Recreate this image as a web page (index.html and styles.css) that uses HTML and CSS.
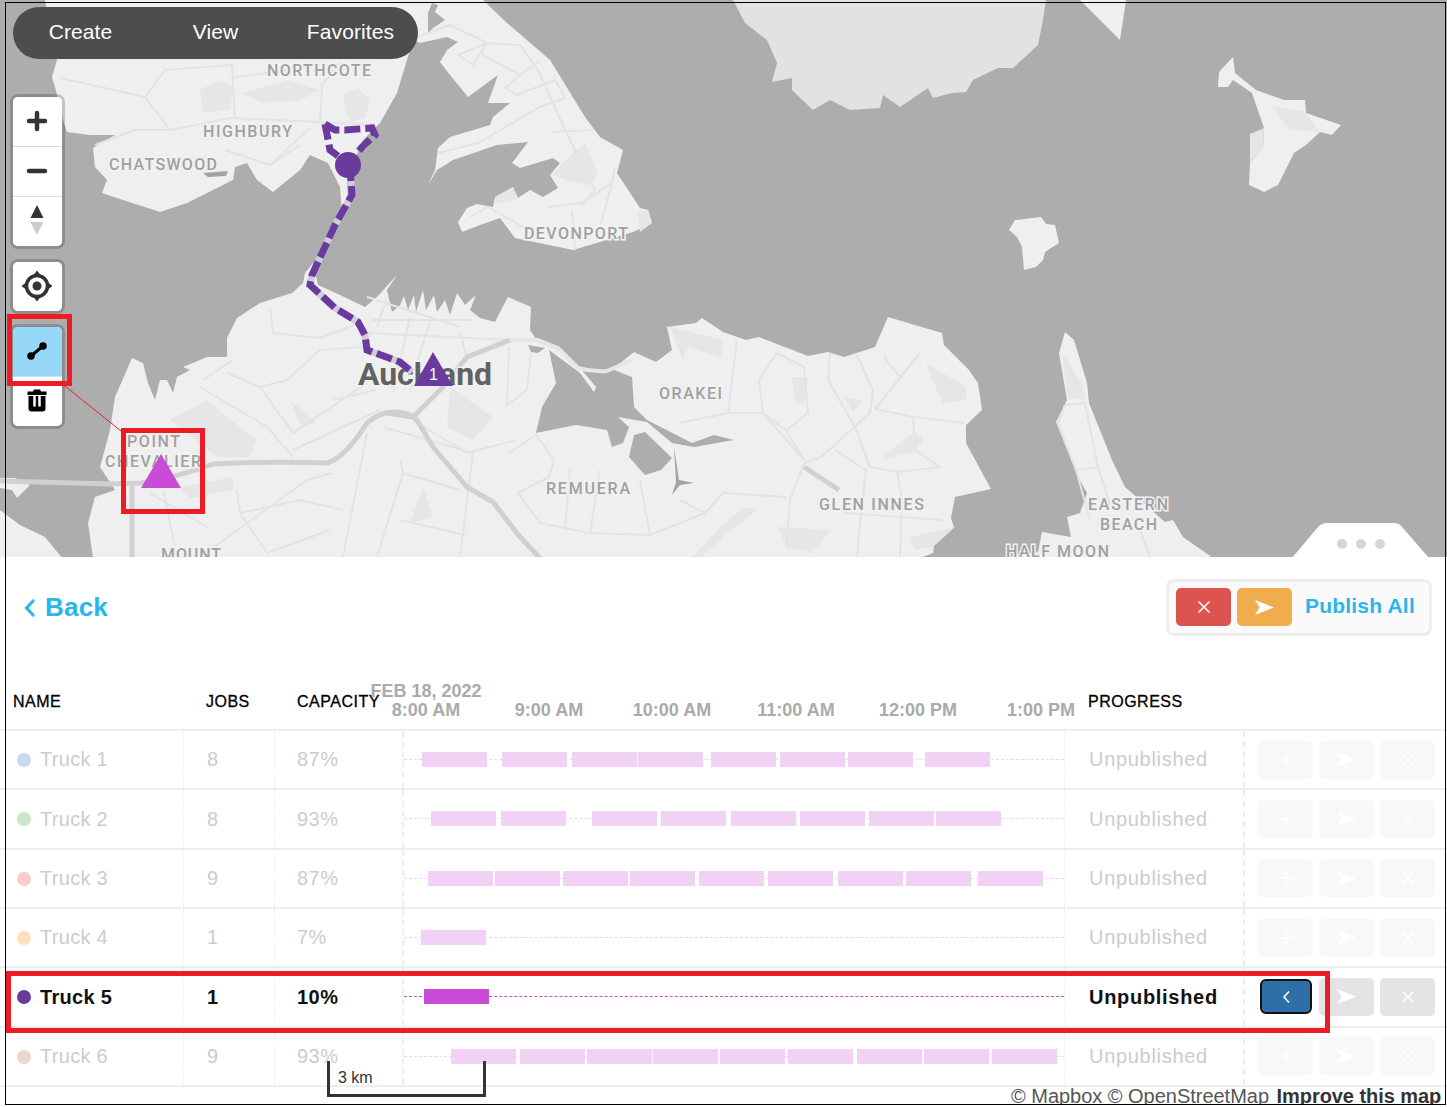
FILE: index.html
```html
<!DOCTYPE html>
<html lang="en">
  <head>
    <meta charset="UTF-8" />
    <title>Routes</title>
    <link rel="stylesheet" href="styles.css" />
  </head>
  <body>
    <div class="page">
      <section class="map">
        <svg class="map-canvas" width="1447" height="558" viewBox="0 0 1447 558">
          <rect class="water" width="1447" height="558" />

          <!-- land -->
          <path class="land" d="M45 0 L57 60 L52 77 L60 105 L63 120 L67 132 L90 135 L115 135 L93 148 L95 167 L107 180 L102 193 L123 200 L160 212 L187 203 L233 180 L235 167 L247 163 L257 180 L273 192 L300 170 L310 155 L328 163 L340 187 L342 213 L348 205 L347 177 L363 140 L380 123 L397 93 L413 40 L420 43 L447 37 L458 42 L447 50 L440 62 L450 75 L468 97 L498 75 L488 103 L510 103 L493 117 L490 125 L450 137 L438 148 L435 170 L428 185 L437 170 L453 160 L497 145 L528 142 L512 163 L520 168 L553 158 L560 163 L550 175 L558 188 L543 197 L530 190 L518 198 L513 187 L495 197 L493 207 L477 204 L467 208 L458 222 L462 232 L480 225 L500 218 L515 238 L573 250 L600 242 L633 232 L652 223 L648 210 L640 208 L617 173 L623 150 L600 137 L585 117 L550 60 L507 23 L483 0 Z" />
          <path class="land" d="M93 558 L88 523 L95 497 L115 490 L100 467 L110 430 L115 397 L132 358 L143 363 L148 383 L155 400 L160 380 L167 380 L173 393 L177 377 L190 370 L183 367 L207 357 L227 357 L227 338 L237 318 L260 303 L292 293 L303 283 L305 273 L313 263 L318 285 L340 295 L365 307 L377 297 L397 275 L387 290 L392 312 L400 305 L404 296 L408 310 L414 295 L416 312 L423 290 L426 310 L434 295 L437 312 L445 300 L450 315 L457 293 L465 305 L476 295 L470 310 L480 318 L495 322 L500 312 L508 297 L531 307 L530 330 L538 342 L558 350 L578 369 L607 372 L614 368 L634 352 L656 362 L672 350 L667 327 L696 323 L702 318 L723 332 L746 340 L759 337 L808 356 L828 352 L844 357 L875 347 L888 317 L942 333 L944 345 L969 370 L978 383 L982 410 L966 425 L966 443 L991 489 L955 497 L951 518 L954 527 L935 540 L933 553 L920 558 Z" />
          <path class="land" d="M1065 332 L1059 353 L1067 400 L1056 422 L1078 477 L1087 493 L1080 513 L1067 517 L1071 537 L1042 532 L1038 552 L1004 558 L1213 558 L1183 537 L1173 520 L1165 522 L1125 487 L1112 460 L1089 403 L1087 383 L1074 340 Z" />
          <path class="land" d="M0 510 L20 525 L45 537 L62 558 L0 558 Z" />
          <path class="land" d="M0 478 L15 478 L30 485 L17 498 L12 490 L0 488 Z" />
          <path class="land-dark" d="M733 0 L745 23 L767 40 L777 63 L772 82 L792 78 L792 90 L813 110 L830 100 L850 110 L880 108 L883 95 L900 107 L928 88 L933 98 L952 93 L966 92 L973 80 L998 68 L1013 68 L1038 45 L1043 20 L1046 0 Z" />
          <path class="land" d="M1080 0 L1120 40 L1126 0 Z" />
          <path class="land" d="M1233 57 L1219 72 L1218 87 L1228 87 L1233 80 L1252 93 L1264 128 L1263 147 L1250 163 L1249 185 L1264 192 L1278 185 L1294 153 L1306 145 L1320 132 L1332 135 L1341 125 L1306 113 L1305 100 L1284 100 L1256 90 L1235 73 Z" />
          <path class="land" d="M1041 217 L1015 220 L1009 230 L1017 237 L1022 247 L1024 270 L1036 267 L1043 260 L1045 252 L1059 243 L1055 225 L1046 224 Z" />

          <!-- bays -->
          <path class="water" d="M432 3 L438 5 L435 12 L445 20 L433 28 L428 33 L428 13 Z" />
          <path class="water" d="M549 350 L556 383 L542 407 L536 433 L576 425 L607 430 L612 447 L623 443 L629 427 L618 417 L647 422 L672 443 L694 447 L734 440 L714 435 L692 443 L647 420 L634 407 L632 377 L614 370 L580 368 L596 387 L594 392 L580 373 Z" />
          <path class="water" d="M634 435 L629 457 L645 475 L661 470 L672 458 L645 432 Z" />
          <path class="water" d="M528 345 L545 348 L538 353 L531 352 Z" />
          <path class="water-dark" d="M674 447 L679 480 L694 483 L680 485 L672 495 L676 482 Z" />
          <path class="water-dark" d="M213 443 L240 455 L220 453 Z" />
          <path class="water-dark" d="M203 173 L228 171 L226 176 L208 177 Z" />

          <!-- parks and suburbs -->
          <path class="park" d="M200 90 L220 80 L233 87 L230 110 L203 113 Z" />
          <path class="park" d="M242 93 L290 80 L320 90 L300 100 L262 103 Z" />
          <path class="park" d="M343 95 L358 88 L370 100 L365 118 L350 122 L345 110 Z" />
          <path class="park" d="M585 143 L598 173 L590 185 L572 182 L552 175 L563 163 Z" />
          <path class="park" d="M495 197 L513 187 L518 198 L497 204 Z" />
          <path class="park" d="M637 212 L648 210 L652 223 L640 232 Z" />
          <path class="park" d="M170 420 L207 400 L227 417 L257 440 L250 457 L217 457 Z" />
          <path class="park" d="M180 487 L233 477 L233 490 L190 498 Z" />
          <path class="park" d="M290 400 L317 423 L300 425 Z" />
          <path class="park" d="M450 387 L493 417 L473 440 L447 427 Z" />
          <path class="park" d="M410 523 L433 517 L423 487 Z" />
          <path class="park" d="M670 327 L723 340 L721 358 L688 347 L683 360 Z" />
          <path class="park" d="M792 377 L808 377 L804 405 L795 403 Z" />
          <path class="park" d="M844 397 L862 400 L853 413 Z" />
          <path class="park" d="M884 455 L915 432 L924 440 L911 453 L886 458 Z" />
          <path class="park" d="M926 363 L966 387 L966 400 L942 403 Z" />
          <path class="park" d="M910 537 L955 527 L933 547 L915 550 Z" />
          <path class="park" d="M779 527 L830 530 L812 553 L786 547 Z" />
          <path class="park" d="M745 507 L757 510 L725 535 L700 558 L692 558 L722 525 Z" />
          <path class="park" d="M1062 353 L1082 383 L1086 400 L1068 398 Z" />
          <path class="park" d="M1250 134 L1264 128 L1263 147 L1250 163 Z" />
          <path class="park" d="M1270 105 L1305 112 L1320 132 L1290 130 Z" />

          <!-- roads -->
          <g class="roads">
            <path d="M60 78 L145 97 L170 130 L230 118 L320 122 L375 125" />
            <path d="M145 97 L165 70 L232 65 L235 118" />
            <path d="M232 78 L320 65 M320 122 L322 85 L340 63" />
            <path d="M95 145 L135 130 L170 130 M225 150 L270 165 L300 145 M270 165 L310 128" />
            <path d="M415 38 L450 25 L487 43 L520 45 L538 70 L565 130 L595 190 L582 205" />
            <path d="M487 43 L458 55 L473 65 L487 43 M482 55 L520 75 L538 62" />
            <path d="M520 75 L505 88 L517 95 L555 80 L565 98 L540 107 L478 143 L438 153" />
            <path d="M552 132 L593 130 M612 183 L582 203 L548 207 M612 183 L600 227 M615 167 L612 183" />
            <path d="M572 210 L575 250 M470 217 L488 207 L523 227" />
            <path d="M270 307 L273 333 L320 338 L360 323 M203 380 L233 360" />
            <path d="M200 387 L267 427 L293 457 M227 373 L260 387 L287 380 L320 350 L363 347" />
            <path d="M260 387 L293 433 L367 383 M333 400 L377 390 M293 450 L380 410" />
            <path d="M367 297 L460 327 M372 320 L470 320 M377 327 L387 297 M410 317 L393 393" />
            <path d="M430 323 L420 353 L410 393 M460 333 L467 357 M367 333 L510 340" />
            <path d="M150 493 L207 527 M163 490 L177 557 M367 433 L343 557 M383 427 L473 453 L460 557" />
            <path d="M237 490 L240 513 L267 553 M200 557 L307 480 L333 473 M400 460 L403 473 L377 557" />
            <path d="M413 420 L467 453 L517 440" />
            <path d="M240 513 L300 500 L343 510 M403 473 L460 490 M267 553 L330 530 M400 520 L465 535" />
            <path d="M509 347 L507 405 L527 390 L531 353" />
            <path d="M509 453 L536 435 L554 460 L549 477 L518 493 L540 523 L589 533 L650 535 L705 513 L723 493 L786 497" />
            <path d="M570 468 L565 530 M600 470 L590 533 M640 480 L650 535 M680 500 L705 513" />
            <path d="M737 340 L728 413 L679 423 M728 413 L763 413 L804 460 L786 430 L808 413 L804 367 L777 353" />
            <path d="M786 430 L763 413 L759 380 L777 353" />
            <path d="M830 353 L828 380 L855 427 L870 467 L897 472 L940 467 L915 450 L913 417 L875 409" />
            <path d="M857 355 L873 390 L870 413 L821 457 L804 463 L790 500 L786 547" />
            <path d="M920 353 L875 409 M884 357 L900 377 M913 417 L964 423" />
            <path d="M835 450 L866 470 L859 533 L857 558 M897 472 L902 500 L900 557 M844 513 L942 520" />
            <path d="M1065 405 L1058 423 L1076 470 L1098 467 L1085 403 L1065 405" />
            <path d="M1098 467 L1110 505 M1076 470 L1090 520 M1140 530 L1150 557" />
          </g>
          <g class="motorways">
            <path d="M0 481 L110 484 L140 483 Q175 478 213 464 Q270 461 327 463 Q345 458 367 423 Q380 412 393 412 Q410 412 417 420 L433 447 L467 487 L493 502 L520 537 L540 558" />
            <path d="M387 413 L413 417 L443 387 L467 357 L510 340" />
            <path d="M132 486 L132 558 M804 467 L839 490" />
          </g>
          <path class="causeway" d="M510 340 L538 340 L558 348 L578 368 Q592 372 607 371 L632 360" />

          <!-- suburb labels -->
          <text class="suburb" x="267" y="76" textLength="104">NORTHCOTE</text>
          <text class="suburb" x="203" y="137" textLength="89">HIGHBURY</text>
          <text class="suburb" x="109" y="170" textLength="108">CHATSWOOD</text>
          <text class="suburb" x="524" y="239" textLength="104">DEVONPORT</text>
          <text class="suburb" x="127" y="447" textLength="53">POINT</text>
          <text class="suburb" x="105" y="467" textLength="96">CHEVALIER</text>
          <text class="suburb" x="161" y="560" textLength="60">MOUNT</text>
          <text class="suburb" x="659" y="399" textLength="63">ORAKEI</text>
          <text class="suburb" x="546" y="494" textLength="84">REMUERA</text>
          <text class="suburb" x="819" y="510" textLength="105">GLEN INNES</text>
          <text class="suburb" x="1088" y="510" textLength="80">EASTERN</text>
          <text class="suburb" x="1100" y="530" textLength="57">BEACH</text>
          <text class="suburb" x="1006" y="557" textLength="103">HALF MOON</text>
          <text class="city" x="358" y="385" textLength="134">Auckland</text>

          <!-- route -->
          <path class="route-under" d="M350 165 L352 195 L335 225 L318 262 L312 275 L310 285 L335 308 L358 322 L365 335 L367 350 L400 362 L412 372" />
          <path class="route-dash" d="M350 165 L352 195 L335 225 L318 262 L312 275 L310 285 L335 308 L358 322 L365 335 L367 350 L400 362 L412 372" />
          <path class="route-dash" d="M325 124 L335 130 L345 130 L372 128 L375 135 L362 147 L352 160 M325 124 L330 150 L338 156" />
          <circle class="stop" cx="348" cy="165" r="13" />
          <path class="stop" d="M433 352 L453 386 L414 386 Z" />
          <text class="stop-num" x="433.5" y="380">1</text>
          <path class="job" d="M161 454 L181 488 L141 488 Z" />

          <path class="callout" d="M65 386 L121 431" />
        </svg>

        <nav class="menu">
          <a>Create</a>
          <a>View</a>
          <a>Favorites</a>
        </nav>

        <div class="controls">
          <div class="ctrl-group">
            <button class="ctrl">
              <svg width="22" height="22" viewBox="0 0 22 22"><path class="ico-thick" d="M11 3 V19 M3 11 H19" /></svg>
            </button>
            <button class="ctrl">
              <svg width="22" height="22" viewBox="0 0 22 22"><path class="ico-thick" d="M3 11 H19" /></svg>
            </button>
            <button class="ctrl">
              <svg width="16" height="32" viewBox="0 0 16 32"><path class="ico-dark" d="M8 0 L14.500 13 H1.500 Z" /><path class="ico-light" d="M1.500 17 H14.500 L8 30 Z" /></svg>
            </button>
          </div>
          <div class="ctrl-group">
            <button class="ctrl">
              <svg width="32" height="32" viewBox="0 0 32 32">
                <circle class="ico-ring" cx="16" cy="16" r="10.500" />
                <circle class="ico-dark" cx="16" cy="16" r="4.500" />
                <path class="ico-dark" d="M16 0.500 L19.500 5 H12.500 Z M16 31.500 L12.500 27 H19.500 Z M0.500 16 L5 12.500 V19.500 Z M31.500 16 L27 19.500 V12.500 Z" />
              </svg>
            </button>
          </div>
          <div class="ctrl-group">
            <button class="ctrl ctrl-on">
              <svg width="22" height="22" viewBox="0 0 22 22">
                <circle class="ico-black" cx="5" cy="16" r="3.800" />
                <circle class="ico-black" cx="17" cy="6" r="3.800" />
                <path class="ico-line" d="M5 16 L17 6" />
              </svg>
            </button>
            <button class="ctrl">
              <svg width="20" height="24" viewBox="0 0 20 24">
                <path class="ico-black" d="M7 0.500 H13 L14 2.500 H19.500 V6 H0.500 V2.500 H6 Z" />
                <path class="ico-black" d="M1.500 7 H18.500 V19.500 Q18.500 22.500 15.500 22.500 H4.500 Q1.500 22.500 1.500 19.500 Z" />
                <path class="ico-slot" d="M7.500 7 V17.500 M12.500 7 V17.500" />
              </svg>
            </button>
          </div>
        </div>

        <svg class="handle" width="138" height="36" viewBox="0 0 138 36">
          <path class="handle-bg" d="M0 36 L26 5 Q30 1 35 1 H102 Q107 1 110 5 L137 36 Z" />
          <circle class="handle-dot" cx="50" cy="22" r="5" />
          <circle class="handle-dot" cx="69" cy="22" r="5" />
          <circle class="handle-dot" cx="88" cy="22" r="5" />
        </svg>
      </section>

      <section class="panel">
        <div class="toolbar">
          <a class="back">
            <svg width="12" height="20" viewBox="0 0 12 20"><path class="back-ico" d="M10 2 L2.500 10 L10 18" /></svg>
            Back
          </a>
          <div class="publish-box">
            <button class="btn btn-red">
              <svg width="14" height="14" viewBox="0 0 14 14"><path class="ico-white" d="M1.500 1.500 L12.500 12.500 M12.500 1.500 L1.500 12.500" /></svg>
            </button>
            <button class="btn btn-orange">
              <svg width="19" height="15" viewBox="0 0 19 15"><path class="ico-fill" d="M0 0 L19 7.500 L0 15 L4.500 7.500 Z" /></svg>
            </button>
            <span class="publish-label">Publish All</span>
          </div>
        </div>

        <div class="row-grid head">
          <div class="hcell hcell-name">NAME</div>
          <div class="hcell hcell-jobs">JOBS</div>
          <div class="hcell hcell-cap">CAPACITY</div>
          <div class="axis">
            <span class="tick" style="left: 22px">FEB 18, 2022<br />8:00 AM</span>
            <span class="tick" style="left: 145px">9:00 AM</span>
            <span class="tick" style="left: 268px">10:00 AM</span>
            <span class="tick" style="left: 392px">11:00 AM</span>
            <span class="tick" style="left: 514px">12:00 PM</span>
            <span class="tick" style="left: 637px">1:00 PM</span>
          </div>
          <div class="hcell hcell-prog">PROGRESS</div>
          <div></div>
        </div>

        <div class="row-grid row dim">
          <div class="cell name"><i class="dot dot-1"></i>Truck 1</div>
          <div class="cell jobs">8</div>
          <div class="cell cap">87%</div>
          <div class="cell track">
            <i class="bar" style="left: 18px"></i><i class="bar" style="left: 98px"></i><i class="bar" style="left: 168px"></i><i class="bar" style="left: 234px"></i><i class="bar" style="left: 307px"></i><i class="bar" style="left: 376px"></i><i class="bar" style="left: 444px"></i><i class="bar" style="left: 521px"></i>
          </div>
          <div class="cell prog">Unpublished</div>
          <div class="cell acts">
            <button class="act"><svg width="14" height="14" viewBox="0 0 14 14"><path class="ico-white" d="M7 0.500 V13.500 M0.500 7 H13.500" /></svg></button>
            <button class="act"><svg width="19" height="15" viewBox="0 0 19 15"><path class="ico-fill" d="M0 0 L19 7.500 L0 15 L4.500 7.500 Z" /></svg></button>
            <button class="act"><svg width="14" height="14" viewBox="0 0 14 14"><path class="ico-white" d="M1.500 1.500 L12.500 12.500 M12.500 1.500 L1.500 12.500" /></svg></button>
          </div>
        </div>

        <div class="row-grid row dim">
          <div class="cell name"><i class="dot dot-2"></i>Truck 2</div>
          <div class="cell jobs">8</div>
          <div class="cell cap">93%</div>
          <div class="cell track">
            <i class="bar" style="left: 27px"></i><i class="bar" style="left: 97px"></i><i class="bar" style="left: 188px"></i><i class="bar" style="left: 257px"></i><i class="bar" style="left: 327px"></i><i class="bar" style="left: 396px"></i><i class="bar" style="left: 465px"></i><i class="bar" style="left: 532px"></i>
          </div>
          <div class="cell prog">Unpublished</div>
          <div class="cell acts">
            <button class="act"><svg width="14" height="14" viewBox="0 0 14 14"><path class="ico-white" d="M7 0.500 V13.500 M0.500 7 H13.500" /></svg></button>
            <button class="act"><svg width="19" height="15" viewBox="0 0 19 15"><path class="ico-fill" d="M0 0 L19 7.500 L0 15 L4.500 7.500 Z" /></svg></button>
            <button class="act"><svg width="14" height="14" viewBox="0 0 14 14"><path class="ico-white" d="M1.500 1.500 L12.500 12.500 M12.500 1.500 L1.500 12.500" /></svg></button>
          </div>
        </div>

        <div class="row-grid row dim">
          <div class="cell name"><i class="dot dot-3"></i>Truck 3</div>
          <div class="cell jobs">9</div>
          <div class="cell cap">87%</div>
          <div class="cell track">
            <i class="bar" style="left: 24px"></i><i class="bar" style="left: 91px"></i><i class="bar" style="left: 159px"></i><i class="bar" style="left: 226px"></i><i class="bar" style="left: 295px"></i><i class="bar" style="left: 364px"></i><i class="bar" style="left: 434px"></i><i class="bar" style="left: 502px"></i><i class="bar" style="left: 574px"></i>
          </div>
          <div class="cell prog">Unpublished</div>
          <div class="cell acts">
            <button class="act"><svg width="14" height="14" viewBox="0 0 14 14"><path class="ico-white" d="M7 0.500 V13.500 M0.500 7 H13.500" /></svg></button>
            <button class="act"><svg width="19" height="15" viewBox="0 0 19 15"><path class="ico-fill" d="M0 0 L19 7.500 L0 15 L4.500 7.500 Z" /></svg></button>
            <button class="act"><svg width="14" height="14" viewBox="0 0 14 14"><path class="ico-white" d="M1.500 1.500 L12.500 12.500 M12.500 1.500 L1.500 12.500" /></svg></button>
          </div>
        </div>

        <div class="row-grid row dim">
          <div class="cell name"><i class="dot dot-4"></i>Truck 4</div>
          <div class="cell jobs">1</div>
          <div class="cell cap">7%</div>
          <div class="cell track">
            <i class="bar" style="left: 17px"></i>
          </div>
          <div class="cell prog">Unpublished</div>
          <div class="cell acts">
            <button class="act"><svg width="14" height="14" viewBox="0 0 14 14"><path class="ico-white" d="M7 0.500 V13.500 M0.500 7 H13.500" /></svg></button>
            <button class="act"><svg width="19" height="15" viewBox="0 0 19 15"><path class="ico-fill" d="M0 0 L19 7.500 L0 15 L4.500 7.500 Z" /></svg></button>
            <button class="act"><svg width="14" height="14" viewBox="0 0 14 14"><path class="ico-white" d="M1.500 1.500 L12.500 12.500 M12.500 1.500 L1.500 12.500" /></svg></button>
          </div>
        </div>

        <div class="row-grid row active">
          <div class="cell name"><i class="dot dot-5"></i>Truck 5</div>
          <div class="cell jobs">1</div>
          <div class="cell cap">10%</div>
          <div class="cell track">
            <i class="bar" style="left: 20px"></i>
          </div>
          <div class="cell prog">Unpublished</div>
          <div class="cell acts">
            <button class="act act-open"><svg width="9" height="14" viewBox="0 0 9 14"><path class="ico-white" d="M7 1.500 L2 7 L7 12.500" /></svg></button>
            <button class="act"><svg width="19" height="15" viewBox="0 0 19 15"><path class="ico-fill" d="M0 0 L19 7.500 L0 15 L4.500 7.500 Z" /></svg></button>
            <button class="act"><svg width="14" height="14" viewBox="0 0 14 14"><path class="ico-white" d="M1.500 1.500 L12.500 12.500 M12.500 1.500 L1.500 12.500" /></svg></button>
          </div>
        </div>

        <div class="row-grid row dim">
          <div class="cell name"><i class="dot dot-6"></i>Truck 6</div>
          <div class="cell jobs">9</div>
          <div class="cell cap">93%</div>
          <div class="cell track">
            <i class="bar" style="left: 47px"></i><i class="bar" style="left: 116px"></i><i class="bar" style="left: 183px"></i><i class="bar" style="left: 249px"></i><i class="bar" style="left: 316px"></i><i class="bar" style="left: 384px"></i><i class="bar" style="left: 453px"></i><i class="bar" style="left: 520px"></i><i class="bar" style="left: 588px"></i>
          </div>
          <div class="cell prog">Unpublished</div>
          <div class="cell acts">
            <button class="act"><svg width="14" height="14" viewBox="0 0 14 14"><path class="ico-white" d="M7 0.500 V13.500 M0.500 7 H13.500" /></svg></button>
            <button class="act"><svg width="19" height="15" viewBox="0 0 19 15"><path class="ico-fill" d="M0 0 L19 7.500 L0 15 L4.500 7.500 Z" /></svg></button>
            <button class="act"><svg width="14" height="14" viewBox="0 0 14 14"><path class="ico-white" d="M1.500 1.500 L12.500 12.500 M12.500 1.500 L1.500 12.500" /></svg></button>
          </div>
        </div>
      </section>

      <div class="scale">3 km</div>
      <div class="attrib">© Mapbox © OpenStreetMap <b>Improve this map</b></div>

      <!-- red marks and the window edge lie over everything -->
      <div class="mark mark-btn"></div>
      <div class="mark mark-job"></div>
      <div class="mark mark-row"></div>
      <div class="frame"></div>
    </div>
  </body>
</html>
```

FILE: styles.css
```css
/* Base */
body {
  margin: 0;
  background: #fff;
  font-family: "Liberation Sans", Arial, sans-serif;
}

button {
  padding: 0;
  border: none;
  font: inherit;
}

.page {
  position: relative;
  width: 1447px;
  height: 1105px;
  overflow: hidden;
}

.frame {
  position: absolute;
  top: 2px;
  left: 5px;
  right: 1px;
  bottom: 0;
  border: 1px solid #000;
  pointer-events: none;
}

/* Map */
.map {
  position: relative;
  height: 557px;
  overflow: hidden;
}

.map-canvas {
  display: block;
}

.water {
  fill: #adadad;
}

.water-dark {
  fill: #a3a3a3;
}

.land {
  fill: #efefef;
}

.land-dark {
  fill: #e2e2e2;
}

.park {
  fill: #e6e6e6;
}

.roads path,
.motorways path,
.causeway {
  fill: none;
  stroke-linejoin: round;
}

.roads path {
  stroke: #e3e3e3;
  stroke-width: 2;
}

.motorways path {
  stroke: #d0d0d0;
  stroke-width: 5;
}

.causeway {
  stroke: #e6e6e6;
  stroke-width: 4;
}

.suburb {
  font-family: Roboto, "Liberation Sans", sans-serif;
  font-size: 16px;
  font-weight: 500;
  fill: #a0a0a0;
  stroke: #f2f2f2;
  stroke-width: 3px;
  paint-order: stroke;
}

.city {
  font-family: Roboto, "Liberation Sans", sans-serif;
  font-size: 32px;
  font-weight: 700;
  fill: #626262;
  stroke: #f2f2f2;
  stroke-width: 3px;
  paint-order: stroke;
}

.route-under,
.route-dash {
  fill: none;
  stroke-width: 7;
}

.route-under {
  stroke: #d0cdd6;
}

.route-dash {
  stroke: #6a3a9e;
  stroke-dasharray: 16 5;
}

.stop {
  fill: #6a3a9e;
}

.stop-num {
  font-size: 16px;
  fill: #fff;
  text-anchor: middle;
}

.job {
  fill: #c94bd6;
}

.callout {
  stroke: #ed1c24;
  stroke-width: 1;
}

/* Top menu */
.menu {
  position: absolute;
  top: 7px;
  left: 13px;
  display: grid;
  grid-template-columns: repeat(3, 135px);
  box-sizing: border-box;
  height: 52px;
  padding-bottom: 2px;
  align-items: center;
  text-align: center;
  background: #4d4d4d;
  border-radius: 26px;
  color: #fff;
  font-size: 21px;
  letter-spacing: 0.1px;
}

/* Map controls */
.controls {
  position: absolute;
  top: 97px;
  left: 13px;
  display: flex;
  flex-direction: column;
  gap: 16px;
  width: 49px;
}

.ctrl-group {
  background: #fff;
  border-radius: 5px;
  box-shadow: 0 0 0 3px rgba(0, 0, 0, 0.18);
  overflow: hidden;
}

.ctrl {
  display: flex;
  align-items: center;
  justify-content: center;
  width: 49px;
  height: 49px;
  padding: 0 1px 1px 0;
  background: #fff;
}

.ctrl + .ctrl {
  border-top: 1px solid #ddd;
  height: 50px;
}

.ctrl-on {
  background: #97d8f8;
}

.ico-thick {
  fill: none;
  stroke: #333;
  stroke-width: 4.5;
  stroke-linecap: round;
}

.ico-dark {
  fill: #333;
}

.ico-light {
  fill: #ccc;
}

.ico-ring {
  fill: none;
  stroke: #333;
  stroke-width: 3.5;
}

.ico-black {
  fill: #000;
}

.ico-line {
  stroke: #000;
  stroke-width: 3;
}

.ico-slot {
  stroke: #fff;
  stroke-width: 2.5;
}

.ico-white {
  fill: none;
  stroke: #fff;
  stroke-width: 1.6;
}

.ico-fill {
  fill: #fff;
}

.handle {
  position: absolute;
  right: 17px;
  bottom: -1px;
}

.handle-bg {
  fill: #fff;
}

.handle-dot {
  fill: #d6d6d6;
}

/* Toolbar */
.toolbar {
  display: flex;
  justify-content: space-between;
  align-items: flex-start;
  height: 116px;
  padding: 22px 15px 0 24px;
  box-sizing: border-box;
}

.back {
  display: flex;
  align-items: center;
  gap: 9px;
  height: 57px;
  color: #29b6ea;
  font-size: 26px;
  font-weight: bold;
  letter-spacing: 0.2px;
}

.back-ico {
  fill: none;
  stroke: #29b6ea;
  stroke-width: 3;
}

.publish-box {
  display: flex;
  align-items: center;
  gap: 6px;
  box-sizing: border-box;
  width: 266px;
  height: 57px;
  padding: 0 7px 1px;
  background: #fafafa;
  border: 3px solid #eee;
  border-radius: 8px;
}

.btn {
  display: flex;
  align-items: center;
  justify-content: center;
  width: 55px;
  height: 38px;
  border-radius: 5px;
}

.btn-red {
  background: #dc5350;
}

.btn-orange {
  background: #f0ad4e;
}

.publish-label {
  margin-left: 7px;
  padding-bottom: 3px;
  color: #29b6ea;
  font-size: 21px;
  font-weight: bold;
  letter-spacing: 0.2px;
}

/* Table */
.row-grid {
  display: grid;
  grid-template-columns: 184px 91px 129px 661px 180px 1fr;
  box-sizing: border-box;
  border-bottom: 2px solid #eee;
}

.head {
  height: 58px;
  align-items: center;
  font-size: 16px;
  letter-spacing: 0.5px;
  color: #000;
}

.hcell {
  padding-top: 2px;
  -webkit-text-stroke: 0.3px #000;
}

.hcell-name {
  padding-left: 13px;
}

.hcell-jobs {
  padding-left: 22px;
}

.hcell-cap {
  padding-left: 22px;
  white-space: nowrap;
}

.hcell-prog {
  padding-left: 23px;
}

.axis {
  position: relative;
  align-self: stretch;
}

.tick {
  position: absolute;
  bottom: 9px;
  transform: translateX(-50%);
  color: #aaa;
  font-size: 18px;
  font-weight: bold;
  line-height: 19px;
  letter-spacing: 0;
  text-align: center;
  white-space: nowrap;
}

.row {
  height: 59.33px;
  font-size: 20px;
  letter-spacing: 0.5px;
}

.dim {
  color: #ccc;
}

.active {
  color: #111;
  font-weight: bold;
}

.cell {
  display: flex;
  align-items: center;
  box-sizing: border-box;
  padding-top: 0.4px;
  border-right: 1px dashed #eee;
}

.name {
  padding-left: 17px;
  gap: 9px;
  letter-spacing: 0.3px;
}

.dot {
  width: 14px;
  height: 14px;
  border-radius: 50%;
}

.dot-1 { background: #c6dbed; }
.dot-2 { background: #cbe6c9; }
.dot-3 { background: #f6cdcd; }
.dot-4 { background: #fddfbd; }
.dot-5 { background: #6a3a9e; }
.dot-6 { background: #ecd6c9; }

.jobs {
  padding-left: 23px;
}

.cap {
  padding-left: 22px;
  border-right: 2px dashed #eee;
}

.track {
  position: relative;
}

.track::before {
  content: "";
  position: absolute;
  top: 28px;
  left: 0;
  right: 0;
  border-top: 1px dashed #f2d2f4;
}

.active .track::before {
  border-top-color: #c94bd6;
}

.bar {
  position: absolute;
  top: 21px;
  width: 65px;
  height: 15px;
  background: #f2d2f4;
}

.active .bar {
  background: #c94bd6;
}

.prog {
  padding-left: 24px;
  border-right: 2px dashed #eee;
  letter-spacing: 0.7px;
}

.acts {
  gap: 6px;
  padding-left: 13px;
  padding-top: 0;
  border-right: none;
}

.act {
  display: flex;
  align-items: center;
  justify-content: center;
  flex: none;
  width: 55px;
  height: 38px;
  background: #f8f8f8;
  border-radius: 5px;
}

.active .act {
  background: #e4e4e4;
}

.active .act-open {
  width: 52px;
  height: 35px;
  margin-left: 2px;
  margin-right: 1px;
  background: #2f6fa8;
  border: 2px solid #111;
  border-radius: 6px;
  box-sizing: border-box;
}

/* Map overlays at the foot of the page */
.scale {
  position: absolute;
  left: 327px;
  bottom: 8px;
  box-sizing: border-box;
  width: 159px;
  height: 36px;
  padding: 8px 0 0 8px;
  border: 3px solid #333;
  border-top: none;
  color: #333;
  font-size: 16px;
}

.attrib {
  position: absolute;
  right: 0;
  bottom: 0;
  width: 436px;
  height: 18px;
  padding-left: 6px;
  background: #fff;
  color: #555;
  font-size: 20px;
  line-height: 18px;
  letter-spacing: -0.02px;
  white-space: nowrap;
}

.attrib b {
  margin-left: 2px;
  color: #333;
  letter-spacing: -0.06px;
}

/* Red marks */
.mark {
  position: absolute;
  box-sizing: border-box;
  border: 5px solid #ed1c24;
  pointer-events: none;
}

.mark-btn {
  top: 314px;
  left: 7px;
  width: 65px;
  height: 72px;
}

.mark-job {
  top: 428px;
  left: 121px;
  width: 84px;
  height: 86px;
}

.mark-row {
  top: 971px;
  left: 6px;
  width: 1324px;
  height: 62px;
}
```
